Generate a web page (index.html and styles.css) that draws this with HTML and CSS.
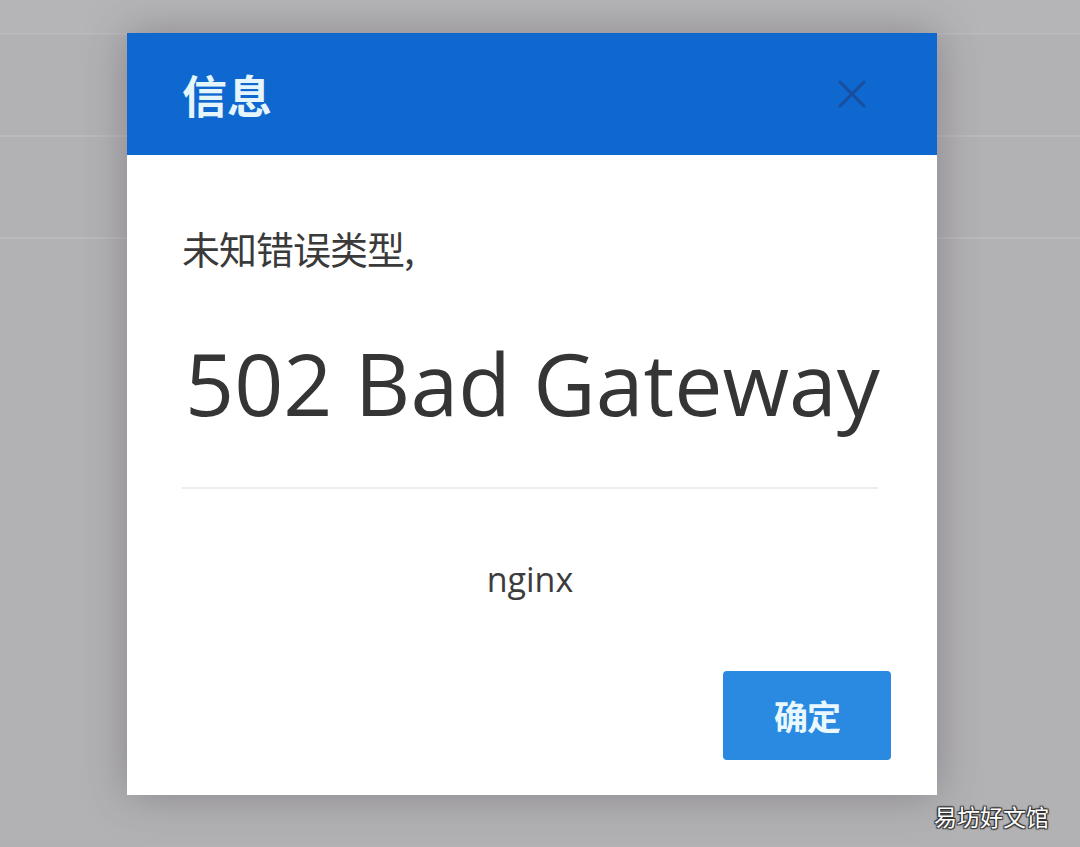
FILE: index.html
```html
<!DOCTYPE html>
<html lang="zh-CN">
<head>
<meta charset="utf-8">
<title>信息</title>
<link rel="stylesheet" href="styles.css">
</head>
<body>
<div class="page">
  <div class="row row-top"></div>
  <div class="row"></div>
  <div class="row"></div>
  <div class="row row-plain"></div>
</div>

<div class="modal">
  <div class="modal-header">
    <span class="modal-title">信息</span>
    <svg class="modal-close" viewBox="0 0 30 30" width="30" height="30" aria-label="关闭">
      <path d="M3 3 L27 27 M27 3 L3 27" stroke="#1a4c97" stroke-width="3" stroke-linecap="round" fill="none"/>
    </svg>
  </div>
  <div class="modal-body">
    <p class="msg">未知错误类型,</p>
    <h1 class="err">502 Bad Gateway</h1>
    <hr class="sep">
    <p class="server">nginx</p>
  </div>
  <div class="modal-footer">
    <button class="btn-ok">确定</button>
  </div>
</div>

<div class="watermark">易坊好文馆</div>
</body>
</html>
```

FILE: styles.css
```css
html, body {
  margin: 0;
  padding: 0;
}
body {
  width: 1080px;
  height: 847px;
  overflow: hidden;
  background: #b1b0b2;
  font-family: "Open Sans", "Noto Sans CJK SC", sans-serif;
  position: relative;
}
.page {
  display: flex;
  flex-direction: column;
}
.row {
  height: 100px;
  border-bottom: 2px solid #bab9bb;
  background: #b2b1b3;
}
.row-top {
  height: 33px;
  background: #b5b4b6;
}
.row-plain {
  border-bottom: 0;
  height: 600px;
}

.modal {
  position: absolute;
  left: 127px;
  top: 33px;
  width: 810px;
  height: 762px;
  background: #ffffff;
  display: flex;
  flex-direction: column;
  box-shadow: 0 0 40px rgba(60, 55, 65, 0.35);
}
.modal-header {
  flex: 0 0 122px;
  height: 122px;
  background: #0f68cf;
  display: flex;
  align-items: center;
  justify-content: space-between;
  padding: 0 70px 0 55px;
  box-sizing: border-box;
}
.modal-title {
  font-family: "Noto Sans CJK SC", sans-serif;
  font-weight: 700;
  font-size: 45px;
  color: #e4f5fb;
}
.modal-close {
  display: block;
  opacity: 0.9;
}
.modal-body {
  flex: 1 1 auto;
  min-height: 0;
  padding: 0 59px 0 55px;
  display: flex;
  flex-direction: column;
}
.msg {
  margin: 68px 0 0;
  font-family: "Noto Sans CJK SC", sans-serif;
  font-size: 38px;
  line-height: 50px;
  color: #3a3a3a;
  letter-spacing: -1px;
  white-space: nowrap;
}
.err {
  margin: 55px 0 0 3px;
  font-family: "Open Sans", sans-serif;
  font-weight: 400;
  font-size: 86px;
  line-height: 110px;
  color: #353535;
  letter-spacing: 0;
  white-space: nowrap;
}
.sep {
  margin: 49px 0 0;
  border: 0;
  border-top: 2px solid #ededed;
}
.server {
  margin: 67px 0 0;
  text-align: center;
  font-family: "Open Sans", sans-serif;
  font-size: 34px;
  line-height: 46px;
  color: #3c3c3c;
}
.modal-footer {
  flex: 0 0 auto;
  display: flex;
  justify-content: flex-end;
  padding: 0 46px 35px 0;
}
.btn-ok {
  width: 168px;
  height: 89px;
  border: 0;
  border-radius: 4px;
  background: #2a89e0;
  color: #e9f8ff;
  font-family: "Noto Sans CJK SC", sans-serif;
  font-weight: 700;
  font-size: 34px;
  letter-spacing: -1px;
}

.watermark {
  position: absolute;
  left: 934px;
  top: 800px;
  font-family: "Noto Sans CJK SC", sans-serif;
  font-size: 23px;
  line-height: 32px;
  color: #ffffff;
  text-shadow: 0 0 1px #333, 1px 1px 1px #333, -1px -1px 1px #333, 1px -1px 1px #333, -1px 1px 1px #333;
}
```
